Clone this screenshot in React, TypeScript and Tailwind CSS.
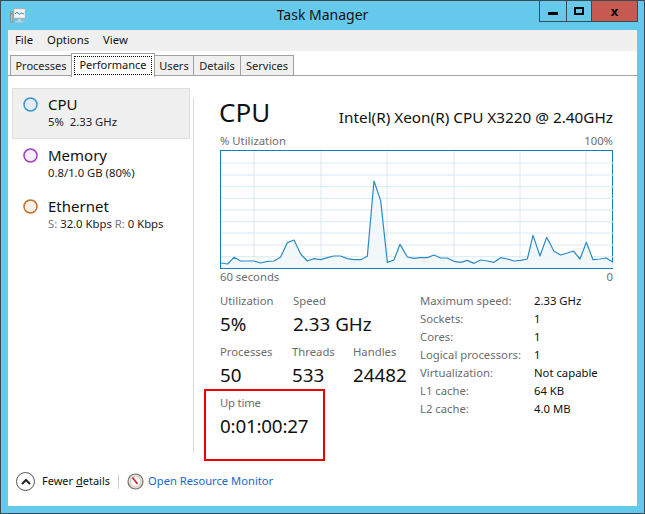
const font = "[font-family:'Noto_Sans',sans-serif]";

// traced samples of the cpu graph, in 1/3 px from the graph's left-top
const samples = [
  [31, 397], [51, 400], [70, 380], [90, 391], [110, 391], [130, 391], [150, 397], [170, 392], [190, 391], [210, 379],
  [230, 336], [250, 328], [270, 370], [290, 391], [310, 384], [330, 387], [350, 381], [370, 376], [390, 376], [410, 384],
  [430, 387], [450, 387], [470, 377], [490, 151], [510, 210], [530, 395], [550, 388], [568, 341], [590, 379], [610, 383],
  [630, 381], [650, 381], [670, 373], [690, 382], [710, 382], [730, 392], [750, 395], [770, 389], [790, 398], [810, 388],
  [830, 391], [850, 395], [870, 381], [890, 385], [910, 391], [930, 389], [950, 385], [967, 314], [988, 376], [1008, 320],
  [1030, 362], [1050, 373], [1070, 367], [1088, 361], [1108, 385], [1127, 335], [1147, 387], [1167, 385], [1187, 382], [1207, 395],
];

const hLines = [97, 133, 168, 203, 238, 273, 307, 343, 378];
const vLines = [130, 331, 529, 730, 928, 1126];

function CpuGraph() {
  const line = samples.map(([x, y]) => `${x},${y}`).join(" ");
  const area = `31,412 ${line} 1207,412`;
  return (
    <svg viewBox="31 61 1176 351" preserveAspectRatio="none" className="block h-[117px] w-[392px]">
      {hLines.map((y) => (
        <line key={y} x1="31" x2="1207" y1={y} y2={y} stroke="#d9eaf4" strokeWidth="3" />
      ))}
      {vLines.map((x) => (
        <line key={x} x1={x} x2={x} y1="61" y2="412" stroke="#d9eaf4" strokeWidth="3" />
      ))}
      <polygon points={area} fill="#f1f6fa" fillOpacity="0.9" />
      <polyline points={line} fill="none" stroke="#2b8bc6" strokeWidth="3.6" strokeLinejoin="round" />
    </svg>
  );
}

function WindowIcon() {
  return (
    <svg width="17" height="16" viewBox="0 0 17 16">
      <rect x="3.5" y="0.5" width="12" height="10" fill="#dfe6e9" stroke="#a9b3b7" />
      <rect x="5" y="2" width="9" height="7" fill="#f2f8fb" />
      <path d="M5 6l2-2 2 2.5 2-1.5 3 1" fill="none" stroke="#3f84c4" />
      <rect x="0.5" y="4" width="2.5" height="10" fill="#b5bdc0" stroke="#7d8a90" strokeWidth="0.7" />
      <rect x="1" y="5" width="1.5" height="1.5" fill="#58b94a" />
      <path d="M8 11h3v2H8zM5.5 13h8v1.5h-8z" fill="#c5ced2" />
    </svg>
  );
}

function GaugeIcon() {
  return (
    <svg width="17" height="17" viewBox="0 0 17 17">
      <circle cx="8.5" cy="8.5" r="7.5" fill="#e7dfd8" stroke="#77706a" strokeWidth="1.2" />
      <circle cx="8.5" cy="8.5" r="5.2" fill="#fbfaf8" stroke="#c9c1ba" strokeWidth="0.8" />
      <path d="M5.5 4.5L10.5 11" stroke="#c8232c" strokeWidth="1.6" />
    </svg>
  );
}

function SideItem({ name, detail, ring, active }: { name: string; detail: React.ReactNode; ring: string; active?: boolean }) {
  return (
    <div className={`flex h-[51px] w-[178px] gap-[10px] border pl-[10px] pt-[5px] ${active ? "border-[#dedede] bg-[#f0f0f0]" : "border-transparent"}`}>
      <svg width="15" height="15" viewBox="0 0 15 15" className={`mt-[3px] shrink-0 ${ring}`}>
        <circle cx="7.5" cy="7.5" r="6.5" strokeWidth="1.5" />
      </svg>
      <div>
        <div className="text-[15px] leading-[20px] text-[#111]">{name}</div>
        <div className="text-[11.3px] leading-[16px] text-[#222]">{detail}</div>
      </div>
    </div>
  );
}

function Stat({ label, value, width }: { label: string; value: string; width: string }) {
  return (
    <div className={width}>
      <div className="text-[11.3px] leading-[15px] text-[#6d6d6d]">{label}</div>
      <div className="mt-[2px] text-[18.8px] leading-[28px] text-[#111]">{value}</div>
    </div>
  );
}

const specs = [
  ["Maximum speed:", "2.33 GHz"],
  ["Sockets:", "1"],
  ["Cores:", "1"],
  ["Logical processors:", "1"],
  ["Virtualization:", "Not capable"],
  ["L1 cache:", "64 KB"],
  ["L2 cache:", "4.0 MB"],
];

export default function App() {
  return (
    <div className={`flex h-[514px] w-[645px] flex-col overflow-hidden border border-[#3a4a52] bg-[#65c9ec] ${font}`}>
      {/* title bar */}
      <div className="grid h-[29px] shrink-0 grid-cols-[1fr_auto_1fr]">
        <div className="pl-[9px] pt-[7px]">
          <WindowIcon />
        </div>
        <div className="pt-[4px] text-[14px] leading-[20px] text-[#111]">Task Manager</div>
        <div className="flex items-start justify-end pr-[6px]">
          <div className="flex h-[21px] border border-t-0 border-[#3a4a52]">
            <div className="flex w-[27px] items-center justify-center border-r border-[#3a4a52]">
              <div className="mt-[4px] h-[3px] w-[10px] bg-black" />
            </div>
            <div className="flex w-[25px] items-center justify-center border-r border-[#3a4a52]">
              <div className="h-[8px] w-[10px] border-2 border-black" />
            </div>
            <div className="flex w-[45px] items-center justify-center bg-[#c75a50] text-[13px] font-bold leading-none text-black">
              x
            </div>
          </div>
        </div>
      </div>

      {/* client area */}
      <div className="mx-[7px] flex h-[476px] flex-col bg-white">
        <div className="flex h-[21px] shrink-0 items-center gap-[14px] bg-[#f0f0f0] pl-[7px] text-[11.3px] text-[#111]">
          <span>File</span>
          <span>Options</span>
          <span>View</span>
        </div>

        <div className="flex h-[25px] shrink-0 items-end border-b border-[#a0a0a0] pl-[2px] text-[11px] text-[#222]">
          <div className="h-[20px] w-[62px] border border-b-0 border-[#a0a0a0] bg-[#f0f0f0] text-center leading-[19px]">Processes</div>
          <div className="relative z-10 -mb-[2px] -ml-px h-[24px] w-[84px] border border-b-0 border-[#a0a0a0] bg-white p-[2px] text-center text-[#111]">
            <div className="border border-dotted border-black pb-[2px] leading-[15px]">Performance</div>
          </div>
          <div className="-ml-px h-[20px] w-[40px] border border-b-0 border-[#a0a0a0] bg-[#f0f0f0] text-center leading-[19px]">Users</div>
          <div className="-ml-px h-[20px] w-[48px] border border-b-0 border-[#a0a0a0] bg-[#f0f0f0] text-center leading-[19px]">Details</div>
          <div className="-ml-px h-[20px] w-[54px] border border-b-0 border-[#a0a0a0] bg-[#f0f0f0] text-center leading-[19px]">Services</div>
        </div>

        <div className="flex flex-1 pl-[4px] pt-[12px]">
          <div className="w-[181px]">
            <SideItem name="CPU" detail={"5%\u00a0\u00a02.33 GHz"} ring="fill-[#e4edf5] stroke-[#3a96d4]" active />
            <SideItem name="Memory" detail="0.8/1.0 GB (80%)" ring="fill-[#f7eefb] stroke-[#a040c0]" />
            <SideItem
              name="Ethernet"
              detail={
                <>
                  <span className="text-[#777]">S:</span> 32.0 Kbps <span className="text-[#777]">R:</span> 0 Kbps
                </>
              }
              ring="fill-[#fcf2e8] stroke-[#c07030]"
            />
          </div>

          <div className="mt-[10px] h-[355px] w-px bg-[#d9d9d9]" />

          <div className="ml-[26px] w-[393px]">
            <div className="flex items-end justify-between pt-[5px]">
              <div className="-ml-px text-[26px] leading-[38px] text-[#111]">CPU</div>
              <div className="pb-[4px] text-[15.3px] leading-[20px] text-[#111]">Intel(R) Xeon(R) CPU X3220 @ 2.40GHz</div>
            </div>
            <div className="mt-[2px] flex justify-between text-[11.3px] leading-[16px] text-[#6d6d6d]">
              <span>% Utilization</span>
              <span>100%</span>
            </div>
            <div className="mt-px border border-[#117dbb]">
              <CpuGraph />
            </div>
            <div className="flex justify-between text-[11.3px] leading-[16px] text-[#6d6d6d]">
              <span>60 seconds</span>
              <span>0</span>
            </div>

            <div className="mt-[8px] flex">
              <div className="w-[200px]">
                <div className="flex">
                  <Stat label="Utilization" value="5%" width="w-[73px]" />
                  <Stat label="Speed" value="2.33 GHz" width="w-[110px]" />
                </div>
                <div className="mt-[6px] flex">
                  <Stat label="Processes" value="50" width="w-[72px]" />
                  <Stat label="Threads" value="533" width="w-[61px]" />
                  <Stat label="Handles" value="24482" width="w-[65px]" />
                </div>
                <div className="relative mt-[6px] tracking-[-0.2px]">
                  <Stat label="Up time" value="0:01:00:27" width="w-[110px]" />
                  <div className="pointer-events-none absolute left-[-16px] top-[-6px] h-[72px] w-[121px] border-2 border-[#ee0000]" />
                </div>
              </div>
              <div className="-mt-px flex flex-col text-[11.3px] leading-[18px]">
                {specs.map(([label, value]) => (
                  <div key={label} className="flex">
                    <span className="w-[114px] text-[#6d6d6d]">{label}</span>
                    <span className="text-[#111]">{value}</span>
                  </div>
                ))}
              </div>
            </div>
          </div>
        </div>

        <div className="flex h-[44px] shrink-0 items-start pl-[8px] pt-[10px]">
          <div className="flex items-center">
            <div className="flex size-[19px] items-center justify-center rounded-full border border-[#555]">
              <svg width="10" height="7" viewBox="0 0 10 7">
                <path d="M1 6l4-4 4 4" fill="none" stroke="#222" strokeWidth="2" />
              </svg>
            </div>
            <span className="ml-[7px] text-[11px] text-[#111]">
              Fewer <span className="underline">d</span>etails
            </span>
            <div className="ml-[8px] h-[14px] w-px bg-[#ccc]" />
            <div className="ml-[8px]">
              <GaugeIcon />
            </div>
            <span className="ml-[4px] text-[11.2px] text-[#1a66d0]">Open Resource Monitor</span>
          </div>
        </div>
      </div>
    </div>
  );
}
